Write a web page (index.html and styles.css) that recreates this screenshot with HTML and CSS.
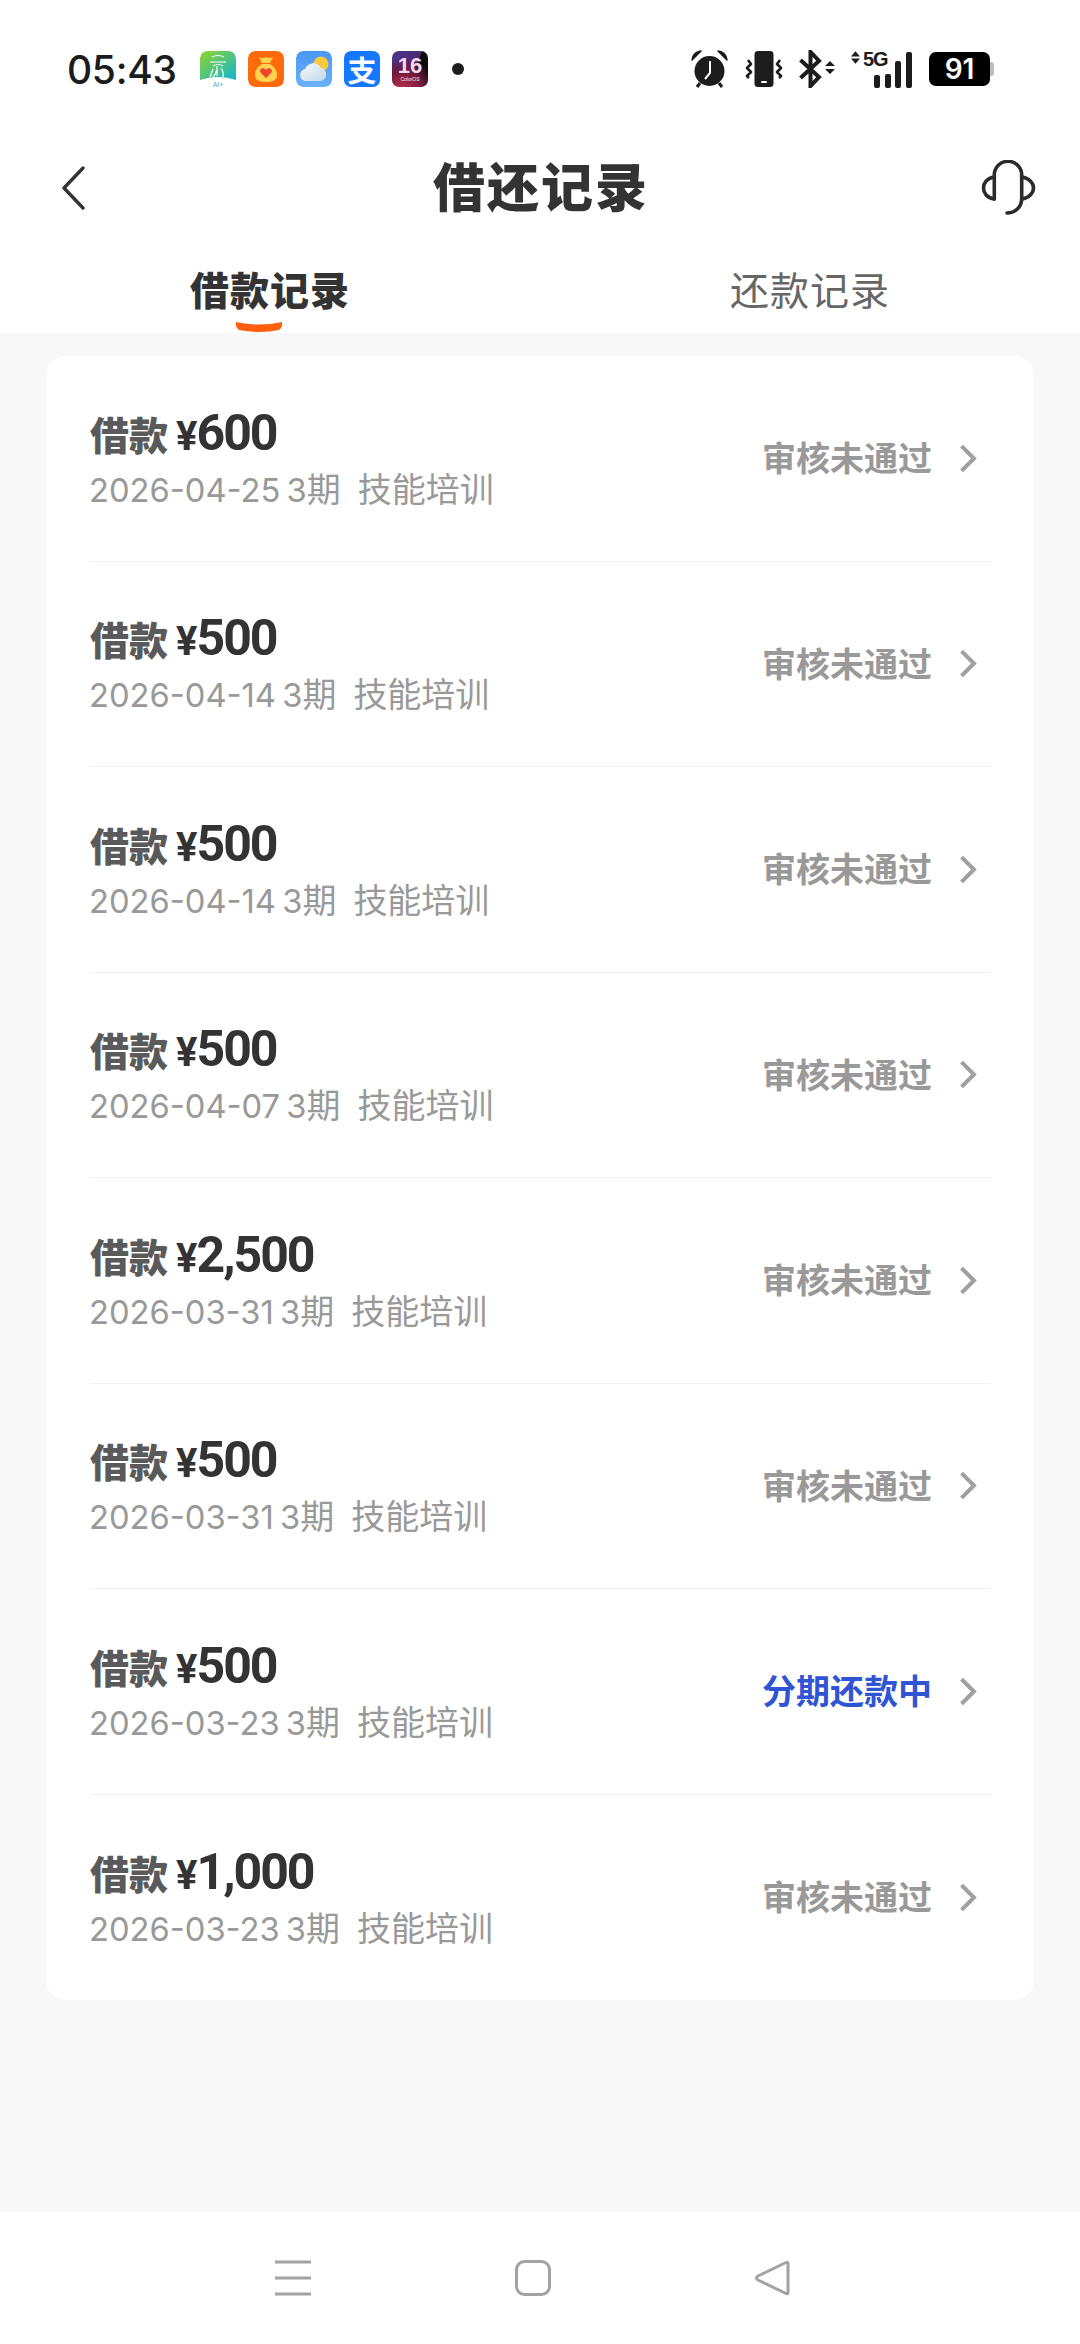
FILE: index.html
```html
<!DOCTYPE html>
<html lang="zh-CN">
<head>
<meta charset="utf-8">
<title>借还记录</title>
<link rel="stylesheet" href="styles.css">
</head>
<body>
<div class="page">
  <header class="top">
    <div class="status">
      <span class="time">05:43</span>
      <div class="apps">
        <svg class="app" viewBox="0 0 36 36"><defs><linearGradient id="g1" x1="0" y1="0" x2="1" y2="1"><stop offset="0" stop-color="#92d52a"/><stop offset="1" stop-color="#12b4d4"/></linearGradient></defs><path d="M0 29V7a7 7 0 0 1 7-7h22a7 7 0 0 1 7 7v22q-18-6-36 0z" fill="url(#g1)"/><path d="M12 6q6-3 12 0M10 11h16M13 15q5-3 10 0M17 15v10M13 18l-3 8M21 17q3 4 2 9M17 18q-1 5-4 8" fill="none" stroke="#fff" stroke-width="1.200"/><text x="18" y="35.500" text-anchor="middle" class="ai">AI+</text></svg>
        <svg class="app" viewBox="0 0 36 36"><rect width="36" height="36" rx="7" fill="#ff6a0c"/><path d="M11 6q3 2 7 0 4 2 7 0l-3 6h-8zM14 13h8c5 3 7 7 7 11 0 5-4 7-11 7s-11-2-11-7c0-4 2-8 7-11z" fill="#ffd24f"/><path d="M18 27l-5.500-5.500c-2-4 3.500-6 5.500-2.500 2-3.500 7.500-1.500 5.500 2.500z" fill="#f0442a"/></svg>
        <svg class="app" viewBox="0 0 36 36"><defs><linearGradient id="g3" x1="0" y1="0" x2="0" y2="1"><stop offset="0" stop-color="#4a96f4"/><stop offset="1" stop-color="#6cb2fa"/></linearGradient><linearGradient id="g4" x1="0" y1="0" x2="1" y2="1"><stop offset="0" stop-color="#f6fafc"/><stop offset="1" stop-color="#c4d8ea"/></linearGradient></defs><rect width="36" height="36" rx="7" fill="url(#g3)"/><circle cx="25" cy="13" r="7.500" fill="#fbc93f"/><path d="M10 30c-7 0-8-10-1-12 3-7 13-8 16-1 7 1 7 13-1 13z" fill="url(#g4)"/></svg>
        <div class="app alipay">支</div>
        <div class="app ios"><span class="ios-num">16</span><span class="ios-sub">ColorOS</span></div>
        <span class="dot"></span>
      </div>
      <div class="sys">
        <svg class="s-alarm" viewBox="0 0 37 38"><circle cx="18.500" cy="21" r="15" fill="#1c1c1c"/><path d="M1 10Q2 2 10 1ZM36 10Q35 2 27 1Z" fill="#1c1c1c" stroke="#1c1c1c" stroke-width="1.500" stroke-linejoin="round"/><path d="M9 33l-3 4M28 33l3 4" stroke="#1c1c1c" stroke-width="3" fill="none"/><path d="M19 11v12l-5 6" fill="none" stroke="#fff" stroke-width="2"/></svg>
        <svg class="s-vib" viewBox="0 0 38 38"><rect x="9.500" y="1" width="19" height="36" rx="3.500" fill="#1c1c1c"/><rect x="16" y="31" width="6" height="2" rx="1" fill="#fff"/><path d="M3 10l3 4-4 4 4 4-4 4 2 2M35 10l-3 4 4 4-4 4 4 4-2 2" fill="none" stroke="#1c1c1c" stroke-width="2.600" stroke-linejoin="round"/></svg>
        <svg class="s-bt" viewBox="0 0 36 38"><path d="M1.500 10L20 27l-8.500 9V2L20 11 1.500 28" fill="none" stroke="#1c1c1c" stroke-width="4"/><path d="M26 16l5-5 5 5zM26 19l5 5 5-5z" fill="#1c1c1c"/></svg>
        <div class="s-net">
          <svg class="s-arrows" viewBox="0 0 10 14"><path d="M0 6l5-6 5 6zM0 8l5 6 5-6z" fill="#1c1c1c"/></svg>
          <span class="s-5g">5G</span>
          <div class="bars"><i class="b1"></i><i class="b2"></i><i class="b3"></i><i class="b4"></i></div>
        </div>
        <div class="battery"><span class="batt-body">91</span><span class="batt-tip"></span></div>
      </div>
    </div>
    <div class="nav">
      <svg class="back" viewBox="0 0 24 44"><path d="M22 2L3 22l19 20" fill="none" stroke="#333" stroke-width="3.400" stroke-linecap="round" stroke-linejoin="round"/></svg>
      <h1 class="title">借还记录</h1>
      <svg class="service" viewBox="0 0 56 56"><path d="M13.300 39V15a13.700 13.700 0 0 1 27.400 0v24c0 8-6.700 14-14.700 14" fill="none" stroke="#2b2b2b" stroke-width="3.600" stroke-linecap="round"/><path d="M13.300 17C6 18 2.500 23 2.500 28s3.500 10 10.800 11M40.700 17C48 18 52.500 23 52.500 28s-4.500 10-11.800 11" fill="none" stroke="#2b2b2b" stroke-width="3.600" stroke-linecap="round"/></svg>
    </div>
    <div class="tabs">
      <div class="tab active">借款记录<svg class="smile" viewBox="0 0 46 12"><path d="M0 1q23 5 46 0q1 5-3 8q-20 4-40 0q-4-3-3-8z" fill="#ff5f0f"/></svg></div>
      <div class="tab">还款记录</div>
    </div>
  </header>

  <main class="content">
    <section class="card">
      <div class="row"><div class="left"><div class="amount"><span class="lbl">借款</span><span class="yen">¥</span><span class="num">600</span></div><div class="meta"><span class="date">2026-04-25 3</span>期<span class="gap"></span>技能培训</div></div><div class="right"><span class="state">审核未通过</span><svg class="chev" viewBox="0 0 16 27"><path d="M2 2l11.500 11.500L2 25" fill="none" stroke="#a0a0a0" stroke-width="3.800"/></svg></div></div>
      <div class="row"><div class="left"><div class="amount"><span class="lbl">借款</span><span class="yen">¥</span><span class="num">500</span></div><div class="meta"><span class="date">2026-04-14 3</span>期<span class="gap"></span>技能培训</div></div><div class="right"><span class="state">审核未通过</span><svg class="chev" viewBox="0 0 16 27"><path d="M2 2l11.500 11.500L2 25" fill="none" stroke="#a0a0a0" stroke-width="3.800"/></svg></div></div>
      <div class="row"><div class="left"><div class="amount"><span class="lbl">借款</span><span class="yen">¥</span><span class="num">500</span></div><div class="meta"><span class="date">2026-04-14 3</span>期<span class="gap"></span>技能培训</div></div><div class="right"><span class="state">审核未通过</span><svg class="chev" viewBox="0 0 16 27"><path d="M2 2l11.500 11.500L2 25" fill="none" stroke="#a0a0a0" stroke-width="3.800"/></svg></div></div>
      <div class="row"><div class="left"><div class="amount"><span class="lbl">借款</span><span class="yen">¥</span><span class="num">500</span></div><div class="meta"><span class="date">2026-04-07 3</span>期<span class="gap"></span>技能培训</div></div><div class="right"><span class="state">审核未通过</span><svg class="chev" viewBox="0 0 16 27"><path d="M2 2l11.500 11.500L2 25" fill="none" stroke="#a0a0a0" stroke-width="3.800"/></svg></div></div>
      <div class="row"><div class="left"><div class="amount"><span class="lbl">借款</span><span class="yen">¥</span><span class="num">2,500</span></div><div class="meta"><span class="date">2026-03-31 3</span>期<span class="gap"></span>技能培训</div></div><div class="right"><span class="state">审核未通过</span><svg class="chev" viewBox="0 0 16 27"><path d="M2 2l11.500 11.500L2 25" fill="none" stroke="#a0a0a0" stroke-width="3.800"/></svg></div></div>
      <div class="row"><div class="left"><div class="amount"><span class="lbl">借款</span><span class="yen">¥</span><span class="num">500</span></div><div class="meta"><span class="date">2026-03-31 3</span>期<span class="gap"></span>技能培训</div></div><div class="right"><span class="state">审核未通过</span><svg class="chev" viewBox="0 0 16 27"><path d="M2 2l11.500 11.500L2 25" fill="none" stroke="#a0a0a0" stroke-width="3.800"/></svg></div></div>
      <div class="row"><div class="left"><div class="amount"><span class="lbl">借款</span><span class="yen">¥</span><span class="num">500</span></div><div class="meta"><span class="date">2026-03-23 3</span>期<span class="gap"></span>技能培训</div></div><div class="right"><span class="state blue">分期还款中</span><svg class="chev" viewBox="0 0 16 27"><path d="M2 2l11.500 11.500L2 25" fill="none" stroke="#a0a0a0" stroke-width="3.800"/></svg></div></div>
      <div class="row"><div class="left"><div class="amount"><span class="lbl">借款</span><span class="yen">¥</span><span class="num">1,000</span></div><div class="meta"><span class="date">2026-03-23 3</span>期<span class="gap"></span>技能培训</div></div><div class="right"><span class="state">审核未通过</span><svg class="chev" viewBox="0 0 16 27"><path d="M2 2l11.500 11.500L2 25" fill="none" stroke="#a0a0a0" stroke-width="3.800"/></svg></div></div>
    </section>
  </main>

  <footer class="softkeys">
    <svg class="key" viewBox="0 0 36 36"><path d="M0 2h36M0 18h36M0 34h36" stroke="#a2a2a2" stroke-width="3" fill="none"/></svg>
    <svg class="key" viewBox="0 0 36 36"><rect x="1.500" y="1.500" width="33" height="33" rx="8" fill="none" stroke="#a2a2a2" stroke-width="3"/></svg>
    <svg class="key" viewBox="0 0 36 36"><path d="M33 3.500c0-1-1-1.500-2-1L3 16c-2 1-2 3 0 4l28 13.500c1 .5 2 0 2-1z" fill="none" stroke="#a2a2a2" stroke-width="3" stroke-linejoin="round"/></svg>
  </footer>
</div>
</body>
</html>
```

FILE: styles.css
```css
* { box-sizing: border-box; margin: 0; padding: 0; }
html, body { width: 1080px; height: 2344px; background: #f8f8f8; overflow: hidden; }
body { font-family: "Noto Sans CJK SC", "Noto Sans", sans-serif; color: #333; }
.page { display: flex; flex-direction: column; width: 1080px; height: 2344px; }

.top { background: #fff; height: 333px; display: flex; flex-direction: column; flex: none; }
.status { height: 138px; padding-left: 67px; display: flex; align-items: center; flex: none; }
.time { font: 500 39px/1 Inter, Roboto, sans-serif; color: #1c1c1c; letter-spacing: -.3px; width: 133px; flex: none; }
.apps { display: flex; align-items: center; gap: 12px; width: 491px; flex: none; }
.app { width: 36px; height: 36px; border-radius: 7px; flex: none; }
.ai { font: 500 7px "Liberation Sans", sans-serif; fill: #5aa8b8; }
.alipay { background: #1677ff; color: #fff; font: 700 29px/36px "Noto Sans CJK SC", sans-serif; text-align: center; }
.ios { background: radial-gradient(circle at 30% 110%, #c2304e 0, #6a1a3a 45%, transparent 70%), linear-gradient(110deg, #4a3490 0, #4a2c70 60%, #0c0a10 62%); color: #f5d8f0; display: flex; flex-direction: column; align-items: center; justify-content: center; }
.ios-num { font: 700 22px/20px "Liberation Sans", sans-serif; }
.ios-sub { font: 400 5px/7px "Liberation Sans", sans-serif; color: #f4e8f0; }
.dot { width: 12px; height: 12px; border-radius: 50%; background: #1c1c1c; margin-left: 12px; }
.sys { display: flex; align-items: center; height: 38px; }
.s-alarm { width: 37px; height: 38px; margin-right: 17px; }
.s-vib { width: 38px; height: 38px; margin-right: 16px; }
.s-bt { width: 36px; height: 38px; margin-right: 16px; }
.s-net { height: 37px; width: 61px; position: relative; margin-right: 17px; }
.s-arrows { width: 9px; height: 13px; position: absolute; left: 0; top: 0; }
.s-5g { position: absolute; left: 12px; top: 0; font: 700 20px/17px "Liberation Sans", sans-serif; color: #1c1c1c; letter-spacing: -1.200px; }
.bars { position: absolute; right: 0; bottom: 0; display: flex; align-items: flex-end; gap: 4.700px; }
.bars i { display: block; width: 6px; background: #1c1c1c; border-radius: 2px; }
.b1 { height: 13px; } .b2 { height: 14px; } .b3 { height: 27px; } .b4 { height: 36px; }
.battery { display: flex; align-items: center; }
.batt-body { width: 61px; height: 34px; background: #000; border-radius: 7px; color: #fff; font: 600 28px/34px Inter, Roboto, sans-serif; text-align: center; }
.batt-tip { width: 4px; height: 14px; background: #bdbdbd; border-radius: 0 3px 3px 0; }

.nav { height: 100px; padding: 0 43px 0 61px; display: flex; align-items: center; justify-content: space-between; position: relative; flex: none; }
.back { width: 24px; height: 44px; }
.title { font-size: 52px; font-weight: 900; color: #333; letter-spacing: 2px; line-height: 48px; position: absolute; left: 2px; right: 0; top: 23px; text-align: center; }
.service { width: 56px; height: 56px; }

.tabs { display: flex; flex: 1; padding-top: 22px; }
.tab { position: relative; width: 540px; text-align: center; font-size: 39px; line-height: 56px; color: #666; letter-spacing: 1px; font-weight: 400; }
.tab.active { font-weight: 900; color: #333; }
.smile { position: absolute; left: 236px; top: 61px; width: 46px; height: 12px; }

.content { flex: 1; padding: 23px 46px 0; }
.card { background: #fff; border-radius: 20px; padding: 0 43px 0 44px; width: 988px; }
.row { height: 205.500px; display: flex; align-items: center; justify-content: space-between; border-bottom: 1px solid #f0f0f0; padding-bottom: 2px; }
.row:last-child { border-bottom: 0; }
.left { display: flex; flex-direction: column; padding-top: 2px; }
.amount { display: flex; align-items: baseline; height: 54px; }
.lbl { font-size: 39px; font-weight: 900; color: #5a5a5a; }
.yen { font: 700 40px/1 Roboto, "Noto Sans", sans-serif; color: #333; margin-left: 8px; }
.num { font: 700 50px/1 Roboto, "Noto Sans", sans-serif; color: #333; letter-spacing: -2px; margin-left: -1px; }
.meta { display: flex; align-items: baseline; font: 400 34px/44px "Noto Sans CJK SC", sans-serif; color: #999; margin-top: 7px; }
.date { font: 400 32.700px/44px Inter, "Noto Sans", sans-serif; word-spacing: -3px; margin-left: -1px; }
.gap { width: 17px; }
.right { display: flex; align-items: center; gap: 27px; margin-right: 14px; }
.state { font-size: 34px; line-height: 44px; font-weight: 700; color: #999; }
.state.blue { color: #2f55d4; }
.chev { width: 18px; height: 29px; margin-top: 2px; }

.softkeys { height: 132px; background: #fff; flex: none; display: flex; align-items: center; justify-content: space-between; padding: 0 289px 0 275px; }
.key { width: 36px; height: 36px; }
```
